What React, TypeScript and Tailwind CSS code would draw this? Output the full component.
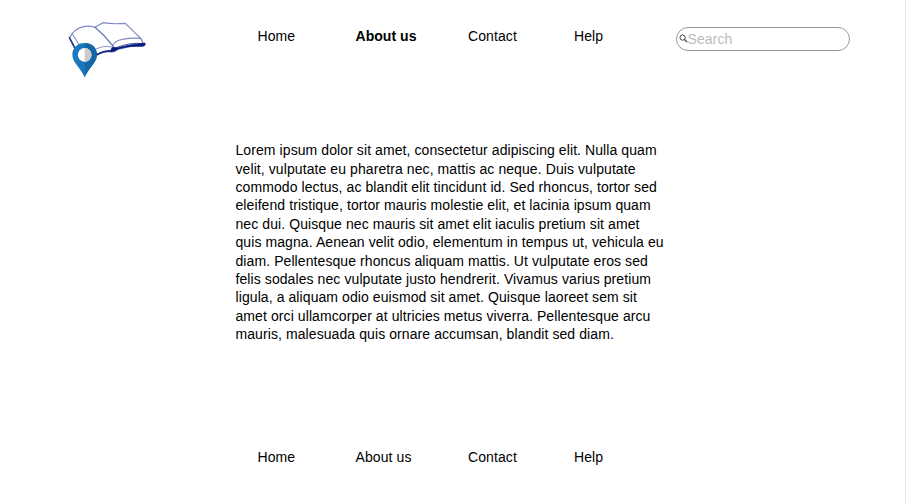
const links = [
  { label: "Home", width: "w-[98px]" },
  { label: "About us", width: "w-[112.5px]" },
  { label: "Contact", width: "w-[106px]" },
  { label: "Help", width: "w-[60px]" },
];

const lines = [
  "Lorem ipsum dolor sit amet, consectetur adipiscing elit. Nulla quam",
  "velit, vulputate eu pharetra nec, mattis ac neque. Duis vulputate",
  "commodo lectus, ac blandit elit tincidunt id. Sed rhoncus, tortor sed",
  "eleifend tristique, tortor mauris molestie elit, et lacinia ipsum quam",
  "nec dui. Quisque nec mauris sit amet elit iaculis pretium sit amet",
  "quis magna. Aenean velit odio, elementum in tempus ut, vehicula eu",
  "diam. Pellentesque rhoncus aliquam mattis. Ut vulputate eros sed",
  "felis sodales nec vulputate justo hendrerit. Vivamus varius pretium",
  "ligula, a aliquam odio euismod sit amet. Quisque laoreet sem sit",
  "amet orci ullamcorper at ultricies metus viverra. Pellentesque arcu",
  "mauris, malesuada quis ornare accumsan, blandit sed diam.",
];

function Logo() {
  return (
    <svg viewBox="0 0 285 210" className="h-[70px] w-[95px] shrink-0" fill="none" strokeLinejoin="round" strokeLinecap="round">
      <path d="M29 67 L37 55 Q65 25 105 37 L129 23 Q155 28 196 25 L242 70 Q205 67 179 75 Q164 80 158 92" stroke="#7f88c4" strokeWidth="3.5" />
      <path d="M105 37 Q133 60 158 92" stroke="#6a75b4" strokeWidth="4" />
      <path d="M37 57 L58 90 M29 67 L45 98" stroke="#6d79b8" strokeWidth="3" />
      <path d="M28 68 L43 97" stroke="#1a2b7e" strokeWidth="4" />
      <path d="M242 70 L250 86 Q210 81 169 98 M158 92 L163 101" stroke="#4b58a0" strokeWidth="3" />
      <path d="M106 103 Q132 90 155 96" stroke="#8b94c8" strokeWidth="3" />
      <path d="M109 122 Q133 107 156 111 Q165 111 174 103 Q212 91 249 94 Q258 92 255 84 L247 85 Q207 89 172 98 L157 97 L152 106 Q129 106 109 118 Z" fill="#071b80" stroke="#071b80" strokeWidth="2" />
      <path d="M74 187 C66 163 37 143 37 119 C37 97 54 84 74 84 C94 84 111 97 111 119 C111 143 82 163 74 187 Z" fill="#1b78bd" />
      <path d="M74 187 C82 163 111 143 111 119 C111 97 94 84 74 84 Z" fill="#1767a4" />
      <circle cx="74" cy="119.5" r="20.5" fill="#fff" />
      <path d="M74 99 A20.5 20.5 0 0 1 74 140 Z" fill="#ccc" />
    </svg>
  );
}

function Nav({ active }: { active?: string }) {
  return (
    <nav className="flex text-[14px] leading-4">
      {links.map(({ label, width }) => (
        <a key={label} className={`${width} shrink-0 whitespace-nowrap ${label === active ? "font-bold tracking-[0.05px]" : "tracking-[0.09px]"}`}>
          {label}
        </a>
      ))}
    </nav>
  );
}

export default function App() {
  return (
    <div className="flex h-[503px] w-[906px] flex-col overflow-hidden border-r border-[#e5e5e5] bg-white font-['Liberation_Sans',Arial,sans-serif] text-black">
      <header className="flex h-[141.1px] items-start pl-[60px] pt-[15px]">
        <Logo />
        <div className="ml-[102.5px] mt-[13px] w-[418px]">
          <Nav active="About us" />
        </div>
        <label className="mt-3 flex h-6 w-[174.5px] items-center rounded-full border border-[#999] pl-[2px]">
          <svg viewBox="0 0 9 9" className="mb-px size-[9px] shrink-0" fill="none" stroke="#444">
            <circle cx="3.6" cy="3.6" r="2.6" />
            <path d="M5.5 5.5 L8.3 8.3" strokeWidth="1.2" />
          </svg>
          <input placeholder="Search" className="min-w-0 flex-1 bg-transparent pt-px text-[14px] tracking-[0.09px] outline-none placeholder:text-[#bbb]" />
        </label>
      </header>
      <main className="ml-[235.5px] h-[307.9px] text-[14px] leading-[18.4px] tracking-[0.085px]">
        <p>
          {lines.map((line) => (
            <span key={line} className="block whitespace-nowrap">{line}</span>
          ))}
        </p>
      </main>
      <footer className="ml-[257.5px]">
        <Nav />
      </footer>
    </div>
  );
}
